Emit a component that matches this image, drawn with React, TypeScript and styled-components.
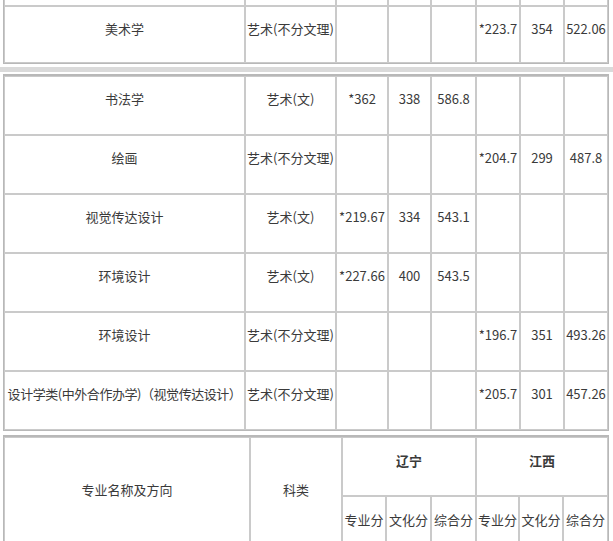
import styled, { createGlobalStyle } from 'styled-components';

const GlobalStyle = createGlobalStyle`
  * { box-sizing: border-box; }
  html, body { margin: 0; padding: 0; background: #fff; }
  body {
    font-family: "Noto Sans CJK SC", "Microsoft YaHei", sans-serif;
    font-size: 13px;
    color: #3a3a3a;
  }
`;

const Page = styled.div`
  width: 609px;
  padding-left: 3px;
  display: flex;
  flex-direction: column;
`;

const ScoreTable = styled.table<{ $cutTop?: boolean; $gap?: number }>`
  width: 606px;
  table-layout: fixed;
  border-collapse: separate;
  border-spacing: 0;
  margin-top: ${({ $gap }) => $gap ?? 0}px;
  border: 1px solid #b8b8b8;
  border-top: ${({ $cutTop }) => ($cutTop ? 'none' : '2px solid #b8b8b8')};
`;

const Band = styled.div`
  height: 9px;
  margin: 1px 0 0 -3px;
  width: 613px;
  border-top: 2px solid #fff;
  border-bottom: 2px solid #fff;
  background: #dadada;
`;

const Cell = styled.td<{ $h?: number; $bold?: boolean; $cut?: boolean; $pb?: number; $tight?: boolean }>`
  height: ${({ $h }) => $h ?? 59}px;
  padding: 0 1px ${({ $pb }) => $pb ?? 14}px;
  border: 1px solid #cacaca;
  border-top: ${({ $cut }) => ($cut ? 'none' : '1px solid #cacaca')};
  text-align: center;
  vertical-align: middle;
  white-space: nowrap;
  overflow: hidden;
  line-height: 18px;
  letter-spacing: ${({ $tight }) => ($tight ? '-0.45px' : 'normal')};
  font-weight: ${({ $bold }) => ($bold ? 700 : 400)};
`;

const upperCols = [241, 91, 52, 43, 45, 44, 44, 44];
const lowerCols = [246, 92, 44, 45, 45, 43, 44, 45];

type Row = [string, string, string, string, string, string, string, string];

const middleRows: Row[] = [
  ['书法学', '艺术(文)', '*362', '338', '586.8', '', '', ''],
  ['绘画', '艺术(不分文理)', '', '', '', '*204.7', '299', '487.8'],
  ['视觉传达设计', '艺术(文)', '*219.67', '334', '543.1', '', '', ''],
  ['环境设计', '艺术(文)', '*227.66', '400', '543.5', '', '', ''],
  ['环境设计', '艺术(不分文理)', '', '', '', '*196.7', '351', '493.26'],
  ['设计学类(中外合作办学)（视觉传达设计）', '艺术(不分文理)', '', '', '', '*205.7', '301', '457.26'],
];

function Cols({ widths }: { widths: number[] }) {
  return (
    <colgroup>
      {widths.map((w, i) => (
        <col key={i} style={{ width: w }} />
      ))}
    </colgroup>
  );
}

export default function App() {
  return (
    <Page>
      <GlobalStyle />

      <ScoreTable $cutTop>
        <Cols widths={upperCols} />
        <tbody>
          <tr>
            {upperCols.map((_, i) => (
              <Cell key={i} $h={6} $cut $pb={0} />
            ))}
          </tr>
          <tr>
            {['美术学', '艺术(不分文理)', '', '', '', '*223.7', '354', '522.06'].map((t, i) => (
              <Cell key={i} $h={57} $pb={12}>{t}</Cell>
            ))}
          </tr>
        </tbody>
      </ScoreTable>

      <Band />

      <ScoreTable>
        <Cols widths={upperCols} />
        <tbody>
          {middleRows.map((row, r) => (
            <tr key={r}>
              {row.map((t, i) => (
                <Cell key={i} $tight={t.length > 12}>{t}</Cell>
              ))}
            </tr>
          ))}
        </tbody>
      </ScoreTable>

      <ScoreTable $gap={4}>
        <Cols widths={lowerCols} />
        <tbody>
          <tr>
            <Cell rowSpan={2} $pb={12}>专业名称及方向</Cell>
            <Cell rowSpan={2} $pb={12}>科类</Cell>
            <Cell colSpan={3} $bold $pb={12}>辽宁</Cell>
            <Cell colSpan={3} $bold $pb={12}>江西</Cell>
          </tr>
          <tr>
            {['专业分', '文化分', '综合分', '专业分', '文化分', '综合分'].map((t, i) => (
              <Cell key={i} $pb={12}>{t}</Cell>
            ))}
          </tr>
        </tbody>
      </ScoreTable>
    </Page>
  );
}
